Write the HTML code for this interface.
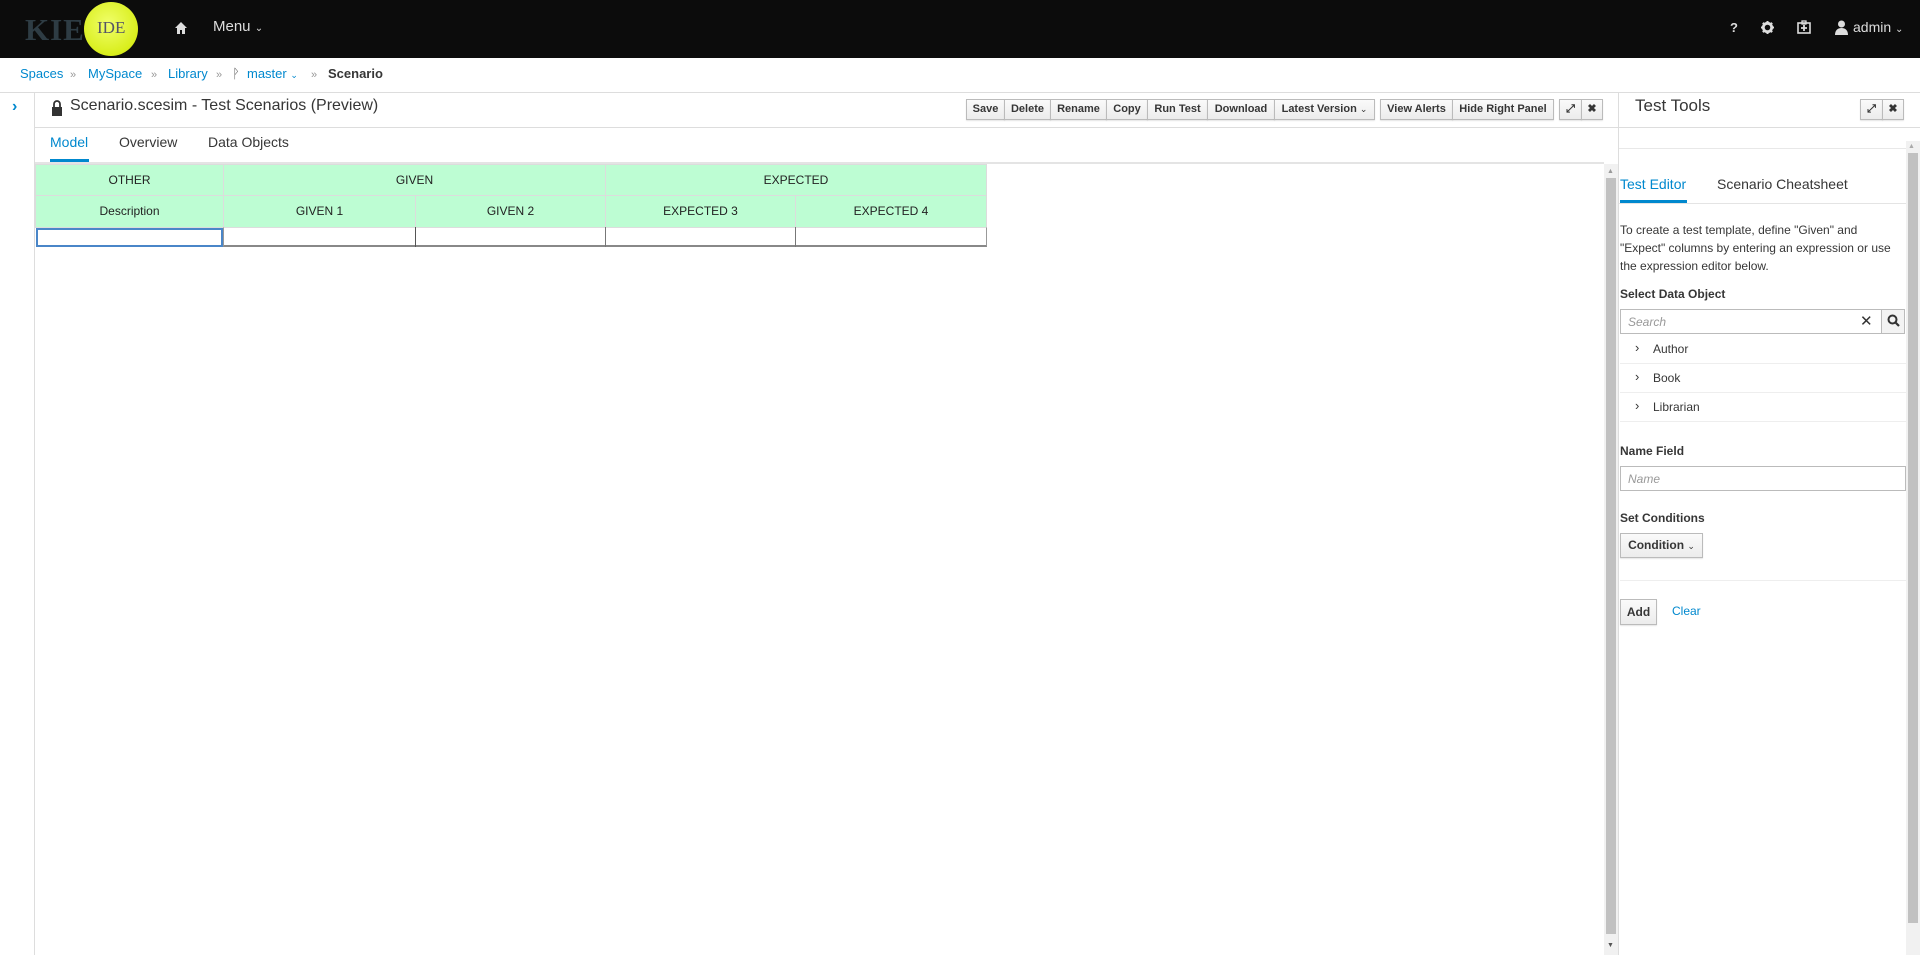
<!DOCTYPE html>
<html><head><meta charset="utf-8"><style>
*{box-sizing:border-box;margin:0;padding:0}
body{width:1920px;height:955px;overflow:hidden;background:#fff;font-family:"Liberation Sans",sans-serif;color:#363636;position:relative}
.a{position:absolute}
.top{left:0;top:0;width:1920px;height:58px;background:#0c0c0c}
.bc{font-size:13px;color:#0088ce;top:66px}
.sep{color:#999;font-size:11px;top:69px}
.btn{position:absolute;top:99px;height:21px;border:1px solid #bbb;background:linear-gradient(#fafafa,#ececec);font-size:11px;font-weight:bold;color:#363636;line-height:19px;text-align:center;box-shadow:0 1px 1px rgba(0,0,0,.1)}
.cell{position:absolute;background:#bdfdd3;border:1px solid #dcdcdc;font-size:12px;text-align:center;color:#222}
.lbl{font-size:12px;font-weight:bold;color:#363636}
.tree{position:absolute;left:1620px;width:286px;height:29px;border-bottom:1px solid #eee;font-size:12px}
</style></head><body>
<div class="a top"></div>
<div class="a" style="left:25px;top:12px;font-family:'Liberation Serif',serif;font-weight:bold;font-size:31px;color:#2e3c44;letter-spacing:1px">KIE</div>
<div class="a" style="left:84px;top:2px;width:54px;height:54px;border-radius:50%;background:radial-gradient(circle at 45% 40%,#f0ff6a,#d9ee1c 70%,#b8cc10)"></div>
<div class="a" style="left:97px;top:18px;font-family:'Liberation Serif',serif;font-size:17px;color:#556">IDE</div>
<svg class="a" style="left:174px;top:21px" width="14" height="14" viewBox="0 0 14 14"><path d="M7 1L1 7h2v6h3V9h2v4h3V7h2z" fill="#ddd"/></svg>
<div class="a" style="left:213px;top:18px;font-size:15px;color:#ddd">Menu <span style="font-size:10px">&#8964;</span></div>
<div class="a" style="left:1730px;top:20px;font-size:13px;font-weight:bold;color:#ddd">?</div>
<svg class="a" style="left:1761px;top:21px" width="13" height="13" viewBox="0 0 14 14"><circle cx="7" cy="7" r="4.5" fill="none" stroke="#ddd" stroke-width="3"/><path d="M7 0v3M7 11v3M0 7h3M11 7h3M2 2l2 2M10 10l2 2M2 12l2-2M10 4l2-2" stroke="#ddd" stroke-width="2.2"/></svg>
<svg class="a" style="left:1797px;top:20px" width="14" height="14" viewBox="0 0 14 14"><rect x="1" y="3" width="12" height="10" fill="none" stroke="#ddd" stroke-width="1.6"/><rect x="5" y="1" width="4" height="3" fill="none" stroke="#ddd" stroke-width="1.3"/><path d="M7 5v6M4 8h6" stroke="#ddd" stroke-width="1.8"/></svg>
<svg class="a" style="left:1835px;top:20px" width="13" height="15" viewBox="0 0 13 15"><circle cx="6.5" cy="4" r="3.5" fill="#ddd"/><path d="M0 15c0-5 3-7 6.5-7s6.5 2 6.5 7z" fill="#ddd"/></svg>
<div class="a" style="left:1853px;top:19px;font-size:14px;color:#ddd">admin <span style="font-size:10px">&#8964;</span></div>

<div class="a bc" style="left:20px">Spaces</div><div class="a sep" style="left:70px">»</div>
<div class="a bc" style="left:88px">MySpace</div><div class="a sep" style="left:151px">»</div>
<div class="a bc" style="left:168px">Library</div><div class="a sep" style="left:216px">»</div>
<div class="a bc" style="left:232px;color:#666">ᚹ</div>
<div class="a bc" style="left:247px">master <span style="font-size:9px">&#8964;</span></div><div class="a sep" style="left:311px">»</div>
<div class="a bc" style="left:328px;color:#363636;font-weight:bold">Scenario</div>

<div class="a" style="left:0;top:92px;width:1920px;height:1px;background:#ddd"></div>
<div class="a" style="left:34px;top:92px;width:1px;height:863px;background:#ddd"></div>
<div class="a" style="left:12px;top:98px;font-size:16px;font-weight:bold;color:#0088ce">›</div>
<svg class="a" style="left:51px;top:99px" width="12" height="17" viewBox="0 0 12 17"><path d="M3 8V5a3 3 0 0 1 6 0v3" fill="none" stroke="#333" stroke-width="1.8"/><rect x="1" y="8" width="10" height="9" fill="#333"/></svg>
<div class="a" style="left:70px;top:97px;font-size:16px;color:#363636">Scenario.scesim - Test Scenarios (Preview)</div>

<div class="btn" style="left:966px;width:39px">Save</div>
<div class="btn" style="left:1004px;width:47px">Delete</div>
<div class="btn" style="left:1050px;width:57px">Rename</div>
<div class="btn" style="left:1106px;width:42px">Copy</div>
<div class="btn" style="left:1147px;width:61px">Run Test</div>
<div class="btn" style="left:1207px;width:68px">Download</div>
<div class="btn" style="left:1274px;width:101px">Latest Version <span style="font-weight:normal;font-size:9px">&#8964;</span></div>
<div class="btn" style="left:1380px;width:73px">View Alerts</div>
<div class="btn" style="left:1452px;width:102px">Hide Right Panel</div>
<div class="btn" style="left:1559px;width:23px">⤢</div>
<div class="btn" style="left:1581px;width:22px">✖</div>

<div class="a" style="left:35px;top:127px;width:1584px;height:1px;background:#ddd"></div>
<div class="a" style="left:50px;top:134px;font-size:14px;color:#0088ce">Model</div>
<div class="a" style="left:50px;top:159px;width:39px;height:3px;background:#0088ce"></div>
<div class="a" style="left:119px;top:134px;font-size:14px;color:#363636">Overview</div>
<div class="a" style="left:208px;top:134px;font-size:14px;color:#363636">Data Objects</div>
<div class="a" style="left:35px;top:162px;width:1569px;height:2px;background:#e4e4e4"></div>

<div class="cell" style="left:35px;top:164px;width:189px;height:32px;line-height:30px">OTHER</div>
<div class="cell" style="left:223px;top:164px;width:383px;height:32px;line-height:30px">GIVEN</div>
<div class="cell" style="left:605px;top:164px;width:382px;height:32px;line-height:30px">EXPECTED</div>
<div class="cell" style="left:35px;top:195px;width:189px;height:33px;line-height:31px">Description</div>
<div class="cell" style="left:223px;top:195px;width:193px;height:33px;line-height:31px">GIVEN 1</div>
<div class="cell" style="left:415px;top:195px;width:191px;height:33px;line-height:31px">GIVEN 2</div>
<div class="cell" style="left:605px;top:195px;width:191px;height:33px;line-height:31px">EXPECTED 3</div>
<div class="cell" style="left:795px;top:195px;width:192px;height:33px;line-height:31px">EXPECTED 4</div>
<div class="a" style="left:223px;top:227px;width:764px;height:20px;border:1px solid #999;border-top:1px solid #ddd;border-bottom:2px solid #888"></div>
<div class="a" style="left:415px;top:227px;width:1px;height:20px;background:#555"></div>
<div class="a" style="left:605px;top:227px;width:1px;height:20px;background:#777"></div>
<div class="a" style="left:795px;top:227px;width:1px;height:20px;background:#777"></div>
<div class="a" style="left:36px;top:228px;width:187px;height:19px;border:2px solid #4a86c8"></div>

<div class="a" style="left:1604px;top:164px;width:14px;height:791px;background:#f1f1f1"></div>
<div class="a" style="left:1606px;top:178px;width:10px;height:756px;background:#c1c1c1"></div>
<div class="a" style="left:1607px;top:168px;font-size:7px;color:#999">▲</div>
<div class="a" style="left:1607px;top:942px;font-size:7px;color:#555">▼</div>

<div class="a" style="left:1618px;top:92px;width:1px;height:863px;background:#ddd"></div>
<div class="a" style="left:1635px;top:96px;font-size:17px;color:#363636">Test Tools</div>
<div class="btn" style="left:1860px;width:23px">⤢</div>
<div class="btn" style="left:1882px;width:22px">✖</div>
<div class="a" style="left:1619px;top:127px;width:301px;height:1px;background:#ddd"></div>
<div class="a" style="left:1906px;top:141px;width:14px;height:814px;background:#f1f1f1"></div>
<div class="a" style="left:1908px;top:143px;font-size:7px;color:#aaa">▲</div>
<div class="a" style="left:1908px;top:153px;width:10px;height:770px;background:#c1c1c1"></div>
<div class="a" style="left:1619px;top:148px;width:287px;height:1px;background:#e8e8e8"></div>
<div class="a" style="left:1620px;top:176px;font-size:14px;color:#0088ce">Test Editor</div>
<div class="a" style="left:1620px;top:200px;width:67px;height:3px;background:#0088ce"></div>
<div class="a" style="left:1717px;top:176px;font-size:14px;color:#363636">Scenario Cheatsheet</div>
<div class="a" style="left:1619px;top:203px;width:287px;height:1px;background:#e4e4e4"></div>
<div class="a" style="left:1620px;top:221px;width:285px;font-size:12px;line-height:18px;color:#363636">To create a test template, define "Given" and "Expect" columns by entering an expression or use the expression editor below.</div>
<div class="a lbl" style="left:1620px;top:287px">Select Data Object</div>
<div class="a" style="left:1620px;top:309px;width:262px;height:25px;border:1px solid #bbb;font-size:12px;font-style:italic;color:#999;padding:5px 7px">Search</div>
<div class="a" style="left:1860px;top:312px;font-size:15px;color:#333">✕</div>
<div class="a" style="left:1881px;top:309px;width:24px;height:25px;border:1px solid #bbb;background:#f3f3f3"></div>
<svg class="a" style="left:1887px;top:314px" width="13" height="14" viewBox="0 0 13 14"><circle cx="5.5" cy="5.5" r="4" fill="none" stroke="#333" stroke-width="2"/><path d="M8.5 8.5l3.5 3.5" stroke="#333" stroke-width="2.2"/></svg>
<div class="tree" style="top:335px"><span class="a" style="left:15px;top:5px;font-size:13px">›</span><span class="a" style="left:33px;top:7px">Author</span></div>
<div class="tree" style="top:364px"><span class="a" style="left:15px;top:5px;font-size:13px">›</span><span class="a" style="left:33px;top:7px">Book</span></div>
<div class="tree" style="top:393px"><span class="a" style="left:15px;top:5px;font-size:13px">›</span><span class="a" style="left:33px;top:7px">Librarian</span></div>
<div class="a lbl" style="left:1620px;top:444px">Name Field</div>
<div class="a" style="left:1620px;top:466px;width:286px;height:25px;border:1px solid #bbb;font-size:12px;font-style:italic;color:#999;padding:5px 7px">Name</div>
<div class="a lbl" style="left:1620px;top:511px">Set Conditions</div>
<div class="btn" style="left:1620px;top:533px;width:83px;height:25px;line-height:23px;font-size:12px">Condition <span style="font-weight:normal;font-size:9px">&#8964;</span></div>
<div class="a" style="left:1620px;top:580px;width:286px;height:1px;background:#eee"></div>
<div class="btn" style="left:1620px;top:599px;width:37px;height:26px;line-height:24px;font-size:12px">Add</div>
<div class="a" style="left:1672px;top:604px;font-size:12px;color:#0088ce">Clear</div>
</body></html>
